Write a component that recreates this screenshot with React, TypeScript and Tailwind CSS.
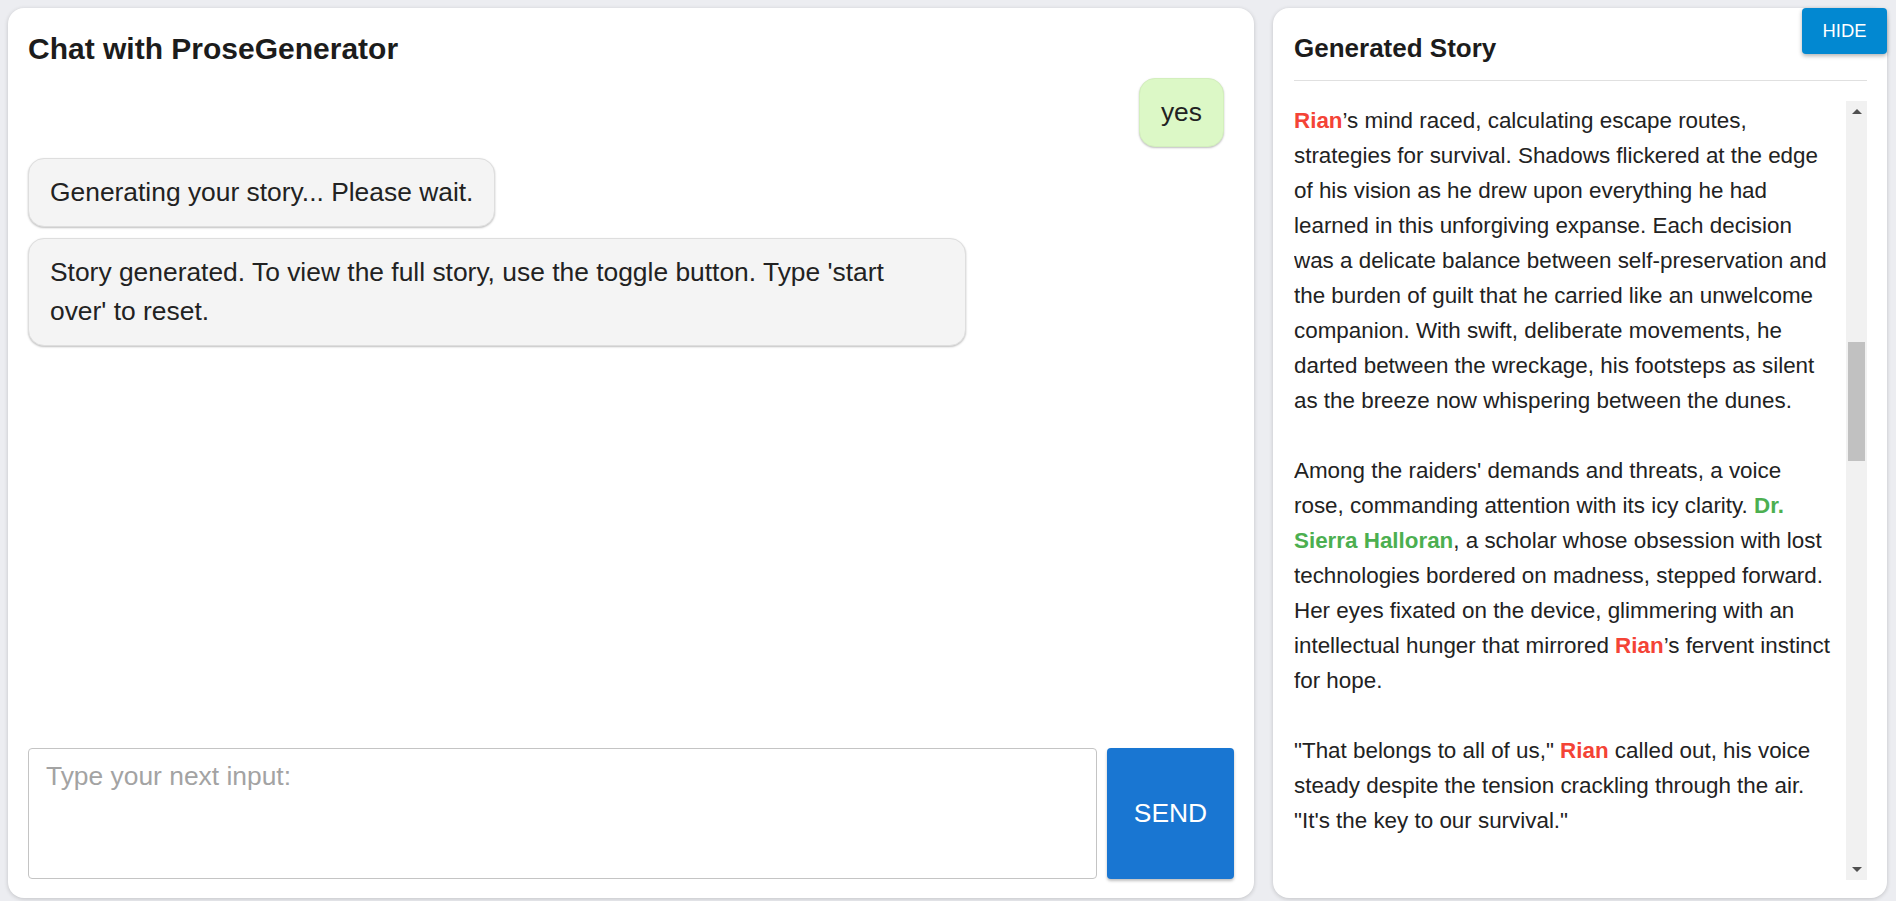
import React from "react";

type Seg = { t: string; c?: "red" | "green" };

const storyLines: Seg[][] = [
  [{ t: "Rian", c: "red" }, { t: "\u2019s mind raced, calculating escape routes," }],
  [{ t: "strategies for survival. Shadows flickered at the edge" }],
  [{ t: "of his vision as he drew upon everything he had" }],
  [{ t: "learned in this unforgiving expanse. Each decision" }],
  [{ t: "was a delicate balance between self-preservation and" }],
  [{ t: "the burden of guilt that he carried like an unwelcome" }],
  [{ t: "companion. With swift, deliberate movements, he" }],
  [{ t: "darted between the wreckage, his footsteps as silent" }],
  [{ t: "as the breeze now whispering between the dunes." }],
  [],
  [{ t: "Among the raiders' demands and threats, a voice" }],
  [{ t: "rose, commanding attention with its icy clarity. " }, { t: "Dr.", c: "green" }],
  [{ t: "Sierra Halloran", c: "green" }, { t: ", a scholar whose obsession with lost" }],
  [{ t: "technologies bordered on madness, stepped forward." }],
  [{ t: "Her eyes fixated on the device, glimmering with an" }],
  [{ t: "intellectual hunger that mirrored " }, { t: "Rian", c: "red" }, { t: "\u2019s fervent instinct" }],
  [{ t: "for hope." }],
  [],
  [{ t: "\"That belongs to all of us,\" " }, { t: "Rian", c: "red" }, { t: " called out, his voice" }],
  [{ t: "steady despite the tension crackling through the air." }],
  [{ t: "\"It's the key to our survival.\"" }],
];

function Seg({ s }: { s: Seg }) {
  if (s.c === "red") return <span className="font-bold text-[#f44336]">{s.t}</span>;
  if (s.c === "green") return <span className="font-bold text-[#4caf50]">{s.t}</span>;
  return <span>{s.t}</span>;
}

export default function App() {
  return (
    <div className="w-[1896px] h-[901px] overflow-hidden bg-[#ecedf1] flex gap-[19px] pl-[8px] pr-[9px] pt-[8px] pb-[3px] font-['Liberation_Sans',Arial,sans-serif] text-[#212121]">
      {/* Chat card */}
      <div className="w-[1246px] h-full bg-white rounded-[16px] shadow-[0_1px_4px_rgba(0,0,0,0.18)] flex flex-col pt-[23px] px-[20px] pb-[19px]">
        <h2 className="text-[30px] leading-[36px] font-bold text-[#1c1c1c]">Chat with ProseGenerator</h2>
        <div className="flex-1 mt-[11px] flex flex-col gap-[11px] text-[26.4px] leading-[39px] text-[#222]">
          <div className="self-end mr-[10px] bg-[#dcf8c6] rounded-[16px] px-[21px] py-[14px] border border-[#d3efbd] shadow-[0_1px_2px_rgba(0,0,0,0.25)]">
            yes
          </div>
          <div className="self-start max-w-[938px] bg-[#f4f4f4] rounded-[16px] px-[21px] py-[14px] border border-[#dedede] shadow-[0_1px_2px_rgba(0,0,0,0.25)]">
            Generating your story... Please wait.
          </div>
          <div className="self-start w-[938px] bg-[#f4f4f4] rounded-[16px] px-[21px] py-[14px] border border-[#dedede] shadow-[0_1px_2px_rgba(0,0,0,0.25)]">
            Story generated. To view the full story, use the toggle button. Type 'start
            <br />
            over' to reset.
          </div>
        </div>
        <div className="h-[131px] flex gap-[10px]">
          <textarea
            placeholder="Type your next input:"
            className="flex-1 h-full resize-none border border-[#c4c4c4] rounded-[4px] px-[17px] pt-[12px] text-[26.4px] leading-[30px] text-[#222] placeholder:text-[#a3a3a3] outline-none"
          />
          <button className="w-[127px] h-full bg-[#1976d2] text-white text-[26.4px] rounded-[4px] shadow-[0_2px_3px_rgba(0,0,0,0.25)]">
            SEND
          </button>
        </div>
      </div>

      {/* Story card */}
      <div className="relative flex-1 h-full bg-white rounded-[16px] shadow-[0_1px_4px_rgba(0,0,0,0.18)] flex flex-col pt-[25px] pl-[21px] pr-[20px] pb-[18px]">
        <button className="absolute top-0 right-0 w-[85px] h-[46px] bg-[#0288d1] text-white text-[18.4px] rounded-[4px] shadow-[0_2px_4px_rgba(0,0,0,0.3)]">
          HIDE
        </button>
        <h3 className="text-[26px] leading-[30px] font-bold text-[#1c1c1c]">Generated Story</h3>
        <div className="mt-[17px] h-px bg-[#e0e0e0]" />
        <div className="mt-[20px] flex-1 flex min-h-0">
          <div className="flex-1 overflow-hidden pt-[2px] text-[22.4px] leading-[35px] text-[#222] whitespace-nowrap">
            {storyLines.map((line, i) => (
              <div key={i} className="h-[35px]">
                {line.map((s, j) => (
                  <Seg key={j} s={s} />
                ))}
              </div>
            ))}
          </div>
          <div className="w-[21px] bg-[#f1f1f1] flex flex-col">
            <div className="h-[21px] flex items-center justify-center">
              <svg width="10" height="5" viewBox="0 0 10 5">
                <path d="M0 5 L5 0 L10 5 Z" fill="#505050" />
              </svg>
            </div>
            <div className="mt-[220px] mx-[2px] h-[119px] bg-[#c1c1c1]" />
            <div className="flex-1" />
            <div className="h-[21px] flex items-center justify-center">
              <svg width="10" height="5" viewBox="0 0 10 5">
                <path d="M0 0 L10 0 L5 5 Z" fill="#505050" />
              </svg>
            </div>
          </div>
        </div>
      </div>
    </div>
  );
}
